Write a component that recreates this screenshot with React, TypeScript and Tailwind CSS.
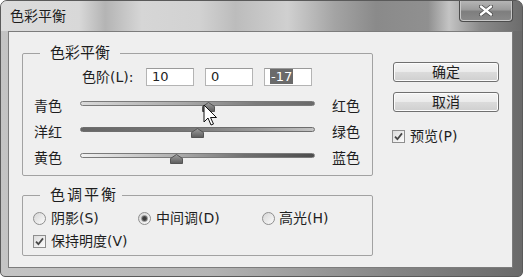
import React from "react";

const FONT = "font-[family-name:'DejaVu_Sans','Noto_Sans_CJK_SC',sans-serif]";

function Thumb() {
  return (
    <svg width="13" height="10" viewBox="0 0 13 10">
      <defs>
        <linearGradient id="thumbg" x1="0" y1="0" x2="0" y2="1">
          <stop offset="0" stopColor="#a0a0a0" />
          <stop offset="1" stopColor="#5c5c5c" />
        </linearGradient>
      </defs>
      <path d="M6.5 0.5 L12.5 4.5 L12.5 9.5 L0.5 9.5 L0.5 4.5 Z" fill="url(#thumbg)" stroke="#555555" strokeWidth="1" />
    </svg>
  );
}

function SliderRow({ left, right, track, thumb }: { left: string; right: string; track: string; thumb: string }) {
  return (
    <div className="flex h-[26px] items-center pl-[11px]">
      <span className="w-[46px] text-[14px] leading-none">{left}</span>
      <div className="relative h-[12px] w-[235px]">
        <div className={track} />
        <div className={thumb}>
          <Thumb />
        </div>
      </div>
      <span className="ml-[17px] text-[14px] leading-none">{right}</span>
    </div>
  );
}

function Radio({ checked }: { checked?: boolean }) {
  return (
    <span className="flex h-[13px] w-[13px] items-center justify-center rounded-full border border-[#8e8e8e] bg-[linear-gradient(135deg,#d6d6d6,#fbfbfb)]">
      {checked && <span className="h-[7px] w-[7px] rounded-full border border-[#8a8a8a] bg-[radial-gradient(circle,#3c3c3c_35%,#707070_100%)]" />}
    </span>
  );
}

function Check() {
  return (
    <span className="flex h-[13px] w-[13px] items-center justify-center border border-[#8e8e8e] bg-[linear-gradient(135deg,#dcdcdc,#fcfcfc)]">
      <svg width="9" height="9" viewBox="0 0 9 9">
        <path d="M1 4.6 L3.4 7.2 L8 1.4" fill="none" stroke="#474747" strokeWidth="1.8" />
      </svg>
    </span>
  );
}

function Btn({ label }: { label: string }) {
  return (
    <div className="flex h-[20px] w-[106px] items-center justify-center rounded-[3px] border border-[#707070] bg-[linear-gradient(to_bottom,#f4f4f4_0%,#ebebeb_48%,#dbdbdb_52%,#cfcfcf_100%)] text-[14px] leading-none shadow-[inset_0_0_0_1px_#fcfcfc]">
      {label}
    </div>
  );
}

function Field({ children }: { children: React.ReactNode }) {
  return (
    <div className="h-[18px] w-[48px] border border-[#b4b4b4] border-t-[#9a9a9a] bg-white pl-[5px] font-['DejaVu_Sans',sans-serif] text-[13px] leading-[16px] text-[#222]">
      {children}
    </div>
  );
}

export default function App() {
  return (
    <div className={`${FONT} flex h-[277px] w-[523px] flex-col overflow-hidden rounded-t-[7px] rounded-b-[5px] border border-[#5a5a5a] bg-[linear-gradient(to_right,#c4c4c4_0%,#b4b4b4_40%,#858585_75%,#6a6a6a_100%)] text-[#1e1e1e]`}>
      {/* title bar */}
      <div className="flex h-[30px] shrink-0 items-start justify-between bg-[linear-gradient(to_right,#dcdcdc_0%,#d8d8d8_15%,#b4b4b4_20%,#d6d6d6_27%,#d2d2d2_38%,#bcbcbc_45%,#d0d0d0_55%,#a4a4a4_64%,#8a8a8a_72%,#909090_82%,#c4c4c4_86%,#8a8a8a_92%,#6c6c6c_100%)]">
        <span className="ml-[9px] mt-[8px] text-[14px] leading-none text-[#1c1c1c]">色彩平衡</span>
        <div className="-mt-[1px] mr-[9px] flex h-[22px] w-[54px] items-center justify-center rounded-b-[4px] border border-t-0 border-[#4c4c4c] bg-[linear-gradient(to_bottom,#b8b8b8_0%,#9c9c9c_45%,#7e7e7e_55%,#8a8a8a_100%)] shadow-[inset_0_0_0_1px_#c8c8c8]">
          <svg width="14" height="11" viewBox="0 0 14 11">
            <path d="M2 1.5 L12 9.5 M12 1.5 L2 9.5" stroke="#4a4a4a" strokeWidth="4" strokeLinecap="round" />
            <path d="M2 1.5 L12 9.5 M12 1.5 L2 9.5" stroke="#ffffff" strokeWidth="2.4" strokeLinecap="round" />
          </svg>
        </div>
      </div>

      {/* body */}
      <div className="flex flex-1 pl-[7px] pr-[9px] pb-[8px]">
        <div className="relative flex flex-1 border border-[#7c7c7c] bg-[#efefef] pl-[13px] pt-[11px]">
          {/* left column */}
          <div className="flex w-[351px] flex-col">
            <fieldset className="rounded-[2px] border border-[#a2a2a2] pb-[4px]">
              <legend className="ml-[17px] px-[10px] text-[15px] leading-[20px]">色彩平衡</legend>
              <div className="mt-[5px] flex h-[18px] items-center pl-[59px]">
                <span className="w-[64px] text-[14px] leading-none">色阶(L):</span>
                <div className="flex gap-[11px]">
                  <Field>10</Field>
                  <Field>0</Field>
                  <Field>
                    <span className="bg-[#6a6a6a] px-[1px] text-white">-17</span>
                  </Field>
                </div>
              </div>
              <div className="mt-[7px] flex flex-col">
                <SliderRow
                  left="青色"
                  right="红色"
                  track="mt-[1px] h-[5px] rounded-full border border-[#7a7a7a] bg-[linear-gradient(to_right,#dadada_0%,#a8a8a8_45%,#7c7c7c_75%,#6a6a6a_100%)]"
                  thumb="absolute left-[122px] top-[2px] flex"
                />
                <SliderRow
                  left="洋红"
                  right="绿色"
                  track="mt-[1px] h-[5px] rounded-full border border-[#6e6e6e] bg-[linear-gradient(to_right,#666666_0%,#777777_45%,#9a9a9a_75%,#c4c4c4_100%)]"
                  thumb="absolute left-[111px] top-[2px] flex"
                />
                <SliderRow
                  left="黄色"
                  right="蓝色"
                  track="mt-[1px] h-[5px] rounded-full border border-[#7a7a7a] bg-[linear-gradient(to_right,#f2f2f2_0%,#b0b0b0_40%,#707070_70%,#4c4c4c_100%)]"
                  thumb="absolute left-[90px] top-[2px] flex"
                />
              </div>
            </fieldset>

            <fieldset className="mt-[9px] rounded-[2px] border border-[#a2a2a2] pb-[4px]">
              <legend className="ml-[17px] pl-[10px] pr-[4px] text-[15px] leading-[20px] tracking-[2px]">色调平衡</legend>
              <div className="mt-[3px] flex h-[20px] items-center pl-[10px] text-[14px] leading-none">
                <div className="flex w-[105px] items-center gap-[5px]">
                  <Radio />
                  <span>阴影(S)</span>
                </div>
                <div className="flex w-[124px] items-center gap-[5px]">
                  <Radio checked />
                  <span>中间调(D)</span>
                </div>
                <div className="flex items-center gap-[4px]">
                  <Radio />
                  <span>高光(H)</span>
                </div>
              </div>
              <div className="mt-[3px] flex h-[20px] items-center gap-[5px] pl-[10px] text-[14px] leading-none">
                <Check />
                <span>保持明度(V)</span>
              </div>
            </fieldset>
          </div>

          {/* right column */}
          <div className="ml-[20px] flex w-[106px] flex-col pt-[19px]">
            <Btn label="确定" />
            <div className="mt-[10px]">
              <Btn label="取消" />
            </div>
            <div className="mt-[14px] -ml-[1px] flex h-[20px] items-center gap-[5px] text-[14px] leading-none">
              <Check />
              <span>预览(P)</span>
            </div>
          </div>

          {/* mouse cursor overlay */}
          <svg className="pointer-events-none absolute left-[194px] top-[72px]" width="16" height="23" viewBox="0 0 16 23">
            <path d="M1 1 L1 18 L5 14 L8 21 L10.5 20 L7.5 13.5 L13.5 13.5 Z" fill="#ffffff" stroke="#111111" strokeWidth="1" strokeLinejoin="round" />
          </svg>
        </div>
      </div>
    </div>
  );
}
